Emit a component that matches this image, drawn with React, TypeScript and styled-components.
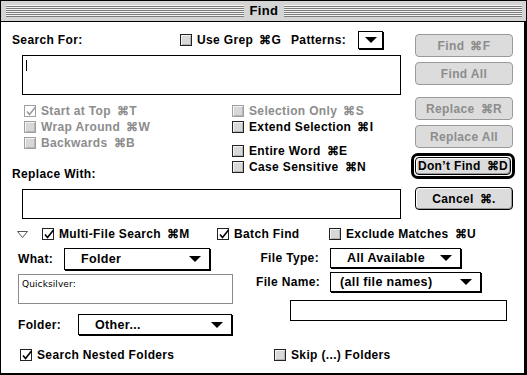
import styled, { createGlobalStyle } from 'styled-components';

const GlobalStyle = createGlobalStyle`
  html, body {
    margin: 0;
    padding: 0;
    background: #fff;
  }
  body {
    font-family: "Liberation Sans", Arial, sans-serif;
    font-size: 12px;
    font-weight: bold;
    letter-spacing: 0.35px;
    color: #000;
  }
`;

const Window = styled.div`
  width: 527px;
  height: 375px;
  box-sizing: border-box;
  border: 1px solid #000;
  background: #ccc;
  display: flex;
  flex-direction: column;
`;

const TitleBar = styled.div`
  height: 20px;
  border-bottom: 1px solid #000;
  background: #d4d4d4;
  display: flex;
  align-items: center;
  padding: 0 4px 0 5px;
`;

const Stripes = styled.div`
  flex: 1;
  height: 12px;
  background: repeating-linear-gradient(to bottom, #f4f4f4 0 1px, #7a7a7a 1px 2px);
`;

const Title = styled.div`
  padding: 0 6px;
  font-size: 13px;
  line-height: 16px;
`;

const Body = styled.div`
  flex: 1;
  background: #fff;
  border-right: 2px solid #000;
  border-bottom: 1px solid #000;
  display: flex;
  flex-direction: column;
`;

const TopSection = styled.div`
  display: flex;
`;

const LeftPane = styled.div`
  width: 414px;
  display: flex;
  flex-direction: column;
`;

const SearchRow = styled.div`
  margin-top: 9px;
  margin-left: 11px;
  height: 18px;
  display: grid;
  grid-template-columns: 168px 111px 67px 25px;
  align-items: center;
`;

const Label = styled.span<{ $w?: number; $right?: boolean }>`
  white-space: nowrap;
  ${(p) => (p.$w ? `width: ${p.$w}px; flex: none;` : '')}
  ${(p) => (p.$right ? 'text-align: right;' : '')}
`;

const Field = styled.div<{ $h: number; $mt: number }>`
  margin: ${(p) => p.$mt}px 0 0 21px;
  width: 379px;
  height: ${(p) => p.$h}px;
  box-sizing: border-box;
  border: 1px solid #000;
  padding: 4px 3px;
`;

const Caret = styled.span`
  display: block;
  width: 1px;
  height: 11px;
  background: #000;
`;

const Options = styled.div`
  margin-top: 8px;
  display: flex;
`;

const OptionCol = styled.div<{ $w?: number; $pl?: number }>`
  box-sizing: border-box;
  display: flex;
  flex-direction: column;
  ${(p) => (p.$w ? `width: ${p.$w}px;` : '')}
  padding-left: ${(p) => p.$pl ?? 0}px;
`;

const OptionGap = styled.div<{ $h: number }>`
  height: ${(p) => p.$h}px;
`;

const CheckRow = styled.label<{ $off?: boolean; $h?: number }>`
  height: ${(p) => p.$h ?? 16}px;
  display: flex;
  align-items: center;
  gap: 5px;
  white-space: nowrap;
  color: ${(p) => (p.$off ? '#8c8c8c' : '#000')};
`;

const Box = styled.span<{ $off?: boolean; $on?: boolean }>`
  position: relative;
  width: 12px;
  height: 12px;
  box-sizing: border-box;
  flex: none;
  border: 1px solid ${(p) => (p.$off ? '#a0a0a0' : '#222')};
  background: ${(p) => (p.$on ? '#fff' : '#d8d8d8')};
  box-shadow: ${(p) => (p.$on ? 'none' : 'inset 1px 1px 0 #f2f2f2, inset -1px -1px 0 #b4b4b4')};
  svg {
    position: absolute;
    left: 0;
    top: -1px;
  }
`;

const Key = styled.span`
  margin-left: 6px;
`;

const ReplaceLabel = styled.div`
  margin-top: 15px;
  margin-left: -12px;
  height: 16px;
  display: flex;
  align-items: center;
`;

const ButtonCol = styled.div`
  width: 98px;
  margin-top: 12px;
  display: flex;
  flex-direction: column;
`;

const Button = styled.div<{ $off?: boolean; $mt: number; $w?: number; $h?: number }>`
  margin-top: ${(p) => p.$mt}px;
  width: ${(p) => p.$w ?? 98}px;
  height: ${(p) => p.$h ?? 23}px;
  box-sizing: border-box;
  border: 1px solid ${(p) => (p.$off ? '#9a9a9a' : '#000')};
  border-radius: 4px;
  background: #dcdcdc;
  color: ${(p) => (p.$off ? '#8c8c8c' : '#000')};
  box-shadow: ${(p) =>
    p.$off ? 'none' : 'inset 1px 1px 0 #fff, inset -1px -1px 0 #9a9a9a'};
  display: flex;
  align-items: center;
  justify-content: center;
  white-space: nowrap;
`;

const DefaultRing = styled.div`
  margin: 5px 0 0 -4px;
  width: 104px;
  height: 26px;
  box-sizing: border-box;
  border: 3px solid #000;
  border-radius: 7px;
  padding: 1px;
`;

const LowerSection = styled.div`
  display: flex;
  flex-direction: column;
`;

const MultiRow = styled.div`
  margin-top: 8px;
  margin-left: 16px;
  height: 14px;
  display: grid;
  grid-template-columns: 25px 175px 112px auto;
  align-items: center;
`;

const Disclosure = styled.svg`
  display: block;
`;

const LowerGrid = styled.div`
  margin-top: 7px;
  display: flex;
`;

const LowerLeft = styled.div`
  margin-left: 17px;
  width: 215px;
  display: flex;
  flex-direction: column;
`;

const LowerRight = styled.div`
  margin-left: 23px;
  width: 251px;
  display: flex;
  flex-direction: column;
`;

const PopRow = styled.div<{ $h: number; $mt?: number }>`
  margin-top: ${(p) => p.$mt ?? 0}px;
  height: ${(p) => p.$h}px;
  display: flex;
  align-items: center;
`;

const Popup = styled.div<{ $w: number; $h: number; $pl?: number; $ml?: number }>`
  position: relative;
  margin-left: ${(p) => p.$ml ?? 0}px;
  width: ${(p) => p.$w}px;
  height: ${(p) => p.$h}px;
  box-sizing: border-box;
  border: 1px solid #000;
  box-shadow: 1px 1px 0 #000;
  background: #fff;
  padding-left: ${(p) => p.$pl ?? 16}px;
  display: flex;
  align-items: center;
  white-space: nowrap;
  font-size: 12.5px;
`;

const Arrow = styled.span<{ $center?: boolean }>`
  position: absolute;
  ${(p) => (p.$center ? 'left: 6px;' : 'right: 8px;')}
  top: 50%;
  margin-top: -3px;
  width: 0;
  height: 0;
  border-left: 6px solid transparent;
  border-right: 6px solid transparent;
  border-top: 6px solid #000;
`;

const PathBox = styled.div`
  margin-top: 4px;
  width: 215px;
  height: 30px;
  box-sizing: border-box;
  border: 1px solid #8a8a8a;
  padding: 4px 3px;
  font-family: "DejaVu Sans", sans-serif;
  font-weight: normal;
  font-size: 9px;
  letter-spacing: 0.1px;
`;

const EmptyBox = styled.div`
  margin: 8px 0 0 34px;
  width: 217px;
  height: 21px;
  box-sizing: border-box;
  border: 1px solid #000;
`;

const BottomRow = styled.div`
  margin-top: 13px;
  margin-left: 19px;
  height: 14px;
  display: grid;
  grid-template-columns: 254px auto;
  align-items: center;
`;

function Check({ off }: { off?: boolean }) {
  const c = off ? '#9a9a9a' : '#000';
  return (
    <svg width="12" height="12" viewBox="0 0 12 12">
      <polyline points="2,6.5 4.5,9.5 10.5,2" fill="none" stroke={c} strokeWidth="1.6" />
    </svg>
  );
}

interface ICheckProps {
  label: string;
  keyName?: string;
  off?: boolean;
  on?: boolean;
  h?: number;
}

function CheckBox({ label, keyName, off, on, h }: ICheckProps) {
  return (
    <CheckRow $off={off} $h={h}>
      <Box $off={off} $on={on}>{on && <Check off={off} />}</Box>
      <span>
        {label}
        {keyName && <Key>⌘{keyName}</Key>}
      </span>
    </CheckRow>
  );
}

function App() {
  return (
    <>
      <GlobalStyle />
      <Window>
        <TitleBar>
          <Stripes />
          <Title>Find</Title>
          <Stripes />
        </TitleBar>
        <Body>
          <TopSection>
            <LeftPane>
              <SearchRow>
                <Label>Search For:</Label>
                <CheckBox label="Use Grep" keyName="G" />
                <Label>Patterns:</Label>
                <Popup $w={25} $h={18} $pl={0}>
                  <Arrow $center />
                </Popup>
              </SearchRow>
              <Field $h={40} $mt={6}>
                <Caret />
              </Field>
              <Options>
                <OptionCol $w={220} $pl={23}>
                  <CheckBox label="Start at Top" keyName="T" off on />
                  <CheckBox label="Wrap Around" keyName="W" off />
                  <CheckBox label="Backwards" keyName="B" off />
                  <ReplaceLabel>Replace With:</ReplaceLabel>
                </OptionCol>
                <OptionCol $pl={11}>
                  <CheckBox label="Selection Only" keyName="S" off />
                  <CheckBox label="Extend Selection" keyName="I" />
                  <OptionGap $h={8} />
                  <CheckBox label="Entire Word" keyName="E" />
                  <CheckBox label="Case Sensitive" keyName="N" />
                </OptionCol>
              </Options>
              <Field $h={30} $mt={7} />
            </LeftPane>
            <ButtonCol>
              <Button $off $mt={0}>Find <Key>⌘F</Key></Button>
              <Button $off $mt={5}>Find All</Button>
              <Button $off $mt={12}>Replace <Key>⌘R</Key></Button>
              <Button $off $mt={5}>Replace All</Button>
              <DefaultRing>
                <Button $mt={0} $w={96} $h={18}>Don’t Find <Key>⌘D</Key></Button>
              </DefaultRing>
              <Button $mt={8}>Cancel <Key>⌘.</Key></Button>
            </ButtonCol>
          </TopSection>
          <LowerSection>
            <MultiRow>
              <Disclosure width="11" height="7" viewBox="0 0 11 7">
                <polygon points="0.5,0.5 10.5,0.5 5.5,6.5" fill="#fff" stroke="#555" />
              </Disclosure>
              <CheckBox label="Multi-File Search" keyName="M" on h={14} />
              <CheckBox label="Batch Find" on h={14} />
              <CheckBox label="Exclude Matches" keyName="U" h={14} />
            </MultiRow>
            <LowerGrid>
              <LowerLeft>
                <PopRow $h={22}>
                  <Label $w={46}>What:</Label>
                  <Popup $w={146} $h={22}>
                    Folder
                    <Arrow />
                  </Popup>
                </PopRow>
                <PathBox>Quicksilver:</PathBox>
                <PopRow $h={21} $mt={10}>
                  <Label $w={60}>Folder:</Label>
                  <Popup $w={154} $h={21}>
                    Other...
                    <Arrow />
                  </Popup>
                </PopRow>
              </LowerLeft>
              <LowerRight>
                <PopRow $h={20}>
                  <Label $w={63} $right>File Type:</Label>
                  <Popup $w={131} $h={20} $ml={11}>
                    All Available
                    <Arrow />
                  </Popup>
                </PopRow>
                <PopRow $h={20} $mt={4}>
                  <Label $w={63} $right>File Name:</Label>
                  <Popup $w={151} $h={20} $ml={11} $pl={9}>
                    (all file names)
                    <Arrow />
                  </Popup>
                </PopRow>
                <EmptyBox />
              </LowerRight>
            </LowerGrid>
            <BottomRow>
              <CheckBox label="Search Nested Folders" on h={14} />
              <CheckBox label="Skip (...) Folders" h={14} />
            </BottomRow>
          </LowerSection>
        </Body>
      </Window>
    </>
  );
}

export default App;
